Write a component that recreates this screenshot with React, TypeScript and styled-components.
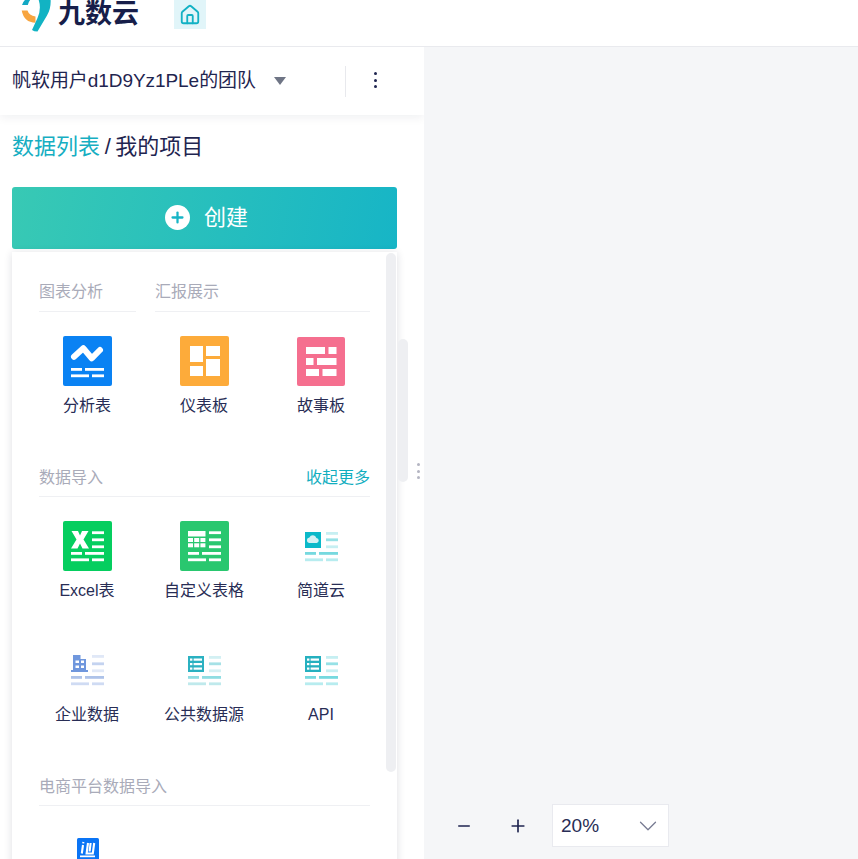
import React from 'react';
import styled, { createGlobalStyle } from 'styled-components';
import { Home, ChevronDown, Minus, Plus } from 'lucide-react';

const GlobalStyle = createGlobalStyle`
	html, body {
		margin: 0;
		padding: 0;
		height: 100%;
		overflow: hidden;
		background: #fff;
	}
	body {
		font-family: "Liberation Sans", "Noto Sans CJK SC", sans-serif;
		color: #1f2550;
	}
	#root {
		height: 100%;
	}
`;

const Page = styled.div`
	display: flex;
	flex-direction: column;
	height: 100vh;
	overflow: hidden;
`;

const Header = styled.header`
	flex: none;
	height: 46px;
	display: flex;
	align-items: flex-start;
	padding-left: 21px;
	box-sizing: border-box;
	background: #fff;
	overflow: hidden;
`;

const Logo = styled.div`
	display: flex;
	align-items: flex-start;
	gap: 7px;
	width: 153px;
`;

const LogoText = styled.span`
	font-family: "Noto Sans CJK SC", sans-serif;
	font-weight: 700;
	font-size: 27px;
	line-height: 27px;
	color: #171e4a;
	margin-top: -2px;
	white-space: nowrap;
`;

const HomeTab = styled.div`
	width: 32px;
	height: 29px;
	display: flex;
	align-items: center;
	justify-content: center;
	background: #e1f5f9;
	color: #12b1c4;
`;

const Body = styled.div`
	flex: 1;
	min-height: 0;
	display: flex;
	border-top: 1px solid #e9eaee;
`;

const Sidebar = styled.aside`
	position: relative;
	flex: none;
	width: 424px;
	display: flex;
	flex-direction: column;
	background: #fff;
	overflow: hidden;
`;

const TeamBar = styled.div`
	flex: none;
	height: 68px;
	display: flex;
	align-items: center;
	padding-left: 12px;
	box-shadow: 0 2px 10px rgba(20, 30, 60, 0.07);
`;

const TeamName = styled.span`
	font-size: 19px;
	line-height: 26px;
	letter-spacing: -0.06px;
	color: #1f2550;
	white-space: nowrap;
`;

const Caret = styled.span`
	width: 0;
	height: 0;
	margin-left: 18px;
	border-left: 6px solid transparent;
	border-right: 6px solid transparent;
	border-top: 8px solid #6f7585;
`;

const MoreButton = styled.div`
	margin-left: 59px;
	width: 59px;
	height: 29px;
	display: flex;
	flex-direction: column;
	align-items: center;
	justify-content: center;
	gap: 3.5px;
	padding-bottom: 2px;
	border-left: 1px solid #e8e9ed;
`;

const Dot = styled.i`
	width: 3px;
	height: 3px;
	background: #1f2550;
	border-radius: 50%;
`;

const Crumbs = styled.div`
	flex: none;
	margin: 17px 0 0 12px;
	height: 30px;
	font-size: 22px;
	line-height: 30px;
	word-spacing: -1.5px;
	color: #1f2550;
	white-space: nowrap;
`;

const CrumbLink = styled.span`
	color: #16aec2;
`;

const CreateButton = styled.div`
	flex: none;
	margin: 25px 0 0 12px;
	width: 385px;
	height: 62px;
	box-sizing: border-box;
	padding: 0 0 2px 4px;
	display: flex;
	align-items: center;
	justify-content: center;
	gap: 14px;
	border-radius: 3px;
	background: linear-gradient(100deg, #38c9b4 0%, #17b5c6 100%);
	color: #fff;
	font-size: 22px;
`;

const CreateText = styled.span`
	margin-bottom: 4px;
`;

const PlusCircle = styled.span`
	width: 25px;
	height: 25px;
	display: flex;
	align-items: center;
	justify-content: center;
	border-radius: 50%;
	background: #fff;
	color: #17b5c6;
`;

const Panel = styled.div`
	position: relative;
	flex: none;
	margin: 3px 0 0 12px;
	width: 385px;
	box-sizing: border-box;
	padding: 28px 27px 0;
	background: #fff;
	box-shadow: 0 1px 8px rgba(20, 30, 60, 0.14);
`;

const Tabs = styled.div`
	display: flex;
	gap: 19px;
`;

const SectionHead = styled.div<{ $grow?: boolean; $width?: number; $pad?: number }>`
	display: flex;
	justify-content: space-between;
	flex: ${(p) => (p.$grow ? 1 : 'none')};
	width: ${(p) => (p.$width ? `${p.$width}px` : 'auto')};
	padding-bottom: ${(p) => p.$pad ?? 6}px;
	border-bottom: 1px solid #eff0f3;
	font-size: 16px;
	line-height: 24px;
	color: #a9abb9;
`;

const FoldLink = styled.span`
	color: #12aebf;
`;

const Grid = styled.div<{ $last?: boolean }>`
	display: grid;
	grid-template-columns: repeat(3, 117px);
	row-gap: 42px;
	margin: 24px -10px ${(p) => (p.$last ? '0' : '48px')};
`;

const Item = styled.div`
	display: flex;
	flex-direction: column;
	align-items: center;
`;

const IconBox = styled.svg`
	display: block;
	width: 49px;
	height: 50px;
`;

const Label = styled.span`
	margin: 8px 0 0 -1px;
	font-size: 16px;
	line-height: 24px;
	color: #282d55;
	white-space: nowrap;
`;

const PanelScroll = styled.div`
	position: absolute;
	top: 1px;
	right: 1px;
	width: 10px;
	height: 519px;
	border-radius: 5px;
	background: #eeeff2;
`;

const SideScroll = styled.div`
	position: absolute;
	top: 292px;
	left: 398px;
	width: 10px;
	height: 143px;
	border-radius: 5px;
	background: #eeeff2;
`;

const Grip = styled.div`
	position: absolute;
	top: 416px;
	left: 417px;
	display: flex;
	flex-direction: column;
	gap: 3.5px;
`;

const GripDot = styled.i`
	width: 3px;
	height: 3px;
	border-radius: 50%;
	background: #b4b5c2;
`;

const Canvas = styled.main`
	position: relative;
	flex: 1;
	background: #f5f6f8;
`;

const ZoomBar = styled.div`
	position: absolute;
	left: 28px;
	bottom: 12px;
	display: flex;
	align-items: center;
	color: #1f2550;
`;

const ZoomButton = styled.span`
	width: 24px;
	height: 24px;
	display: flex;
	align-items: center;
	justify-content: center;
	margin-right: 30px;
`;

const ZoomSelect = styled.div`
	width: 117px;
	height: 43px;
	box-sizing: border-box;
	margin-left: -8px;
	padding: 0 5px 0 8px;
	display: flex;
	align-items: center;
	justify-content: space-between;
	background: #fff;
	border: 1px solid #e9eaef;
	font-size: 19px;
	color: #282d55;
`;

const SelectArrow = styled.span`
	display: flex;
	color: #777b92;
`;

type BarColors = { side: string[]; low: string[] };

const WHITE: BarColors = {
	side: ['#fff', '#fff', '#fff'],
	low: ['#fff', '#fff'],
};

// the text-like bars every data icon shares
const DocBars = ({ colors, side = true, top = 11 }: { colors: BarColors; side?: boolean; top?: number }) => (
	<>
		{side &&
			[top, 17.4, 24.4].map((y, i) => (
				<rect key={i} x="29" y={y} width="12" height="2.8" fill={colors.side[i]} />
			))}
		<rect x="8" y="31" width="11" height="2.8" fill={colors.low[0]} />
		<rect x="22" y="31" width="19" height="2.8" fill={colors.low[0]} />
		<rect x="8" y="37.4" width="18" height="2.8" fill={colors.low[1]} />
		<rect x="29" y="37.4" width="12" height="2.8" fill={colors.low[1]} />
	</>
);

const AnalysisIcon = () => (
	<IconBox viewBox="0 0 49 50">
		<rect width="49" height="50" rx="2" fill="#0a82f3" />
		<path
			d="M11 20.7 L20.3 12.3 L28.7 22.3 L37 14"
			fill="none"
			stroke="#fff"
			strokeWidth="6"
			strokeLinecap="round"
			strokeLinejoin="round"
		/>
		<g transform="translate(0 1)">
			<DocBars colors={WHITE} side={false} />
		</g>
	</IconBox>
);

const DashboardIcon = () => (
	<IconBox viewBox="0 0 49 50">
		<rect width="49" height="50" rx="2" fill="#fdab3a" />
		<rect x="10" y="10" width="13" height="16" fill="#fff" />
		<rect x="26" y="10" width="14" height="10" fill="#fff" />
		<rect x="10" y="30" width="13" height="10" fill="#fff" />
		<rect x="26" y="23" width="14" height="17" fill="#fff" />
	</IconBox>
);

const StoryIcon = () => (
	<IconBox viewBox="0 0 49 50">
		<rect x="0" y="1" width="48" height="49" rx="2" fill="#f56f8f" />
		<rect x="9" y="11" width="19" height="7" fill="#fff" />
		<rect x="31.5" y="11" width="8" height="7" fill="#fff" />
		<rect x="9" y="22" width="7.5" height="7" fill="#fff" />
		<rect x="20" y="22" width="19.5" height="7" fill="#fff" />
		<rect x="9" y="33" width="13" height="7" fill="#fff" />
		<rect x="25.5" y="33" width="14" height="7" fill="#fff" />
	</IconBox>
);

const ExcelIcon = () => (
	<IconBox viewBox="0 0 49 50">
		<rect width="49" height="50" rx="2" fill="#05ce5f" />
		<path d="M8.5 10 H15 L17 14.5 L19 10 H25.5 L20.5 18.5 L26 27.5 H19.5 L17 22.5 L14.5 27.5 H8 L13.5 18.5 Z" fill="#fff" />
		<DocBars colors={WHITE} top={10.3} />
	</IconBox>
);

const CustomTableIcon = () => (
	<IconBox viewBox="0 0 49 50">
		<rect width="49" height="50" rx="2" fill="#29c76f" />
		<rect x="8" y="10" width="17.5" height="5.5" fill="#fff" />
		{[17, 22.3].map((y) =>
			[8, 14.2, 20.4].map((x) => <rect key={`${x}-${y}`} x={x} y={y} width="5" height="4" fill="#fff" />),
		)}
		<DocBars colors={WHITE} top={10.3} />
	</IconBox>
);

const TEAL_BARS: BarColors = {
	side: ['#c6eff2', '#96e1e6', '#c6eff2'],
	low: ['#76d9df', '#b7ecef'],
};

const JianDaoIcon = () => (
	<IconBox viewBox="0 0 49 50">
		<rect x="8" y="11" width="16" height="16" fill="#0bb9c9" />
		<path
			d="M12 22 a2.8 2.8 0 0 1 .4 -5.5 a3.8 3.8 0 0 1 7 .4 a2.6 2.6 0 0 1 .4 5.1 Z"
			fill="#d4f1f3"
		/>
		<DocBars colors={TEAL_BARS} />
	</IconBox>
);

const BLUE_BARS: BarColors = {
	side: ['#e0e8f7', '#c4d3f0', '#e0e8f7'],
	low: ['#aec3e9', '#cfdbf3'],
};

const CompanyIcon = () => (
	<IconBox viewBox="0 0 49 50">
		<path
			fillRule="evenodd"
			d="M10 10 H17.5 V14 H23 V25 H25 V27 H8 V25 H10 Z M12.5 15.5 V18 H16 V15.5 Z M18 15.5 V18 H21 V15.5 Z M12.5 20.5 V23 H16 V20.5 Z M18 20.5 V23 H21 V20.5 Z"
			fill="#7097dd"
		/>
		<DocBars colors={BLUE_BARS} top={10} />
	</IconBox>
);

const ListIcon = ({ fill, bars }: { fill: string; bars: BarColors }) => (
	<IconBox viewBox="0 0 49 50">
		<rect x="8" y="11" width="16" height="16" fill={fill} />
		{[13.5, 18, 22.5].map((y) => (
			<React.Fragment key={y}>
				<rect x="10" y={y} width="2.4" height="2.2" fill="#fff" />
				<rect x="13.6" y={y} width="8.4" height="2.2" fill="#fff" />
			</React.Fragment>
		))}
		<DocBars colors={bars} />
	</IconBox>
);

const SOURCE_BARS: BarColors = {
	side: ['#d3f0f3', '#a6e1e6', '#d3f0f3'],
	low: ['#8fdde2', '#bfe9ec'],
};

const ShopIcon = () => (
	<IconBox viewBox="0 0 49 50">
		<rect x="14" y="8" width="22" height="22" rx="1.5" fill="#0a74f5" />
		<path
			d="M20 15 L18.8 23.5 M25 13 L23.6 23.5 H29.8 L31.2 13 M27.6 13 L26.6 21.5 M20.4 12 L20.2 13.4"
			fill="none"
			stroke="#fff"
			strokeWidth="2.1"
		/>
		<rect x="17" y="25.5" width="15" height="1.7" fill="#fff" />
	</IconBox>
);

const LogoMark = () => (
	<svg width="30" height="32" viewBox="0 0 30 32" aria-hidden="true">
		<path d="M1 5 Q2 1.5 5 -1 H10 Q7.5 1.5 6.8 5 Z" fill="#12a8c4" />
		<path d="M0.7 10.5 H6.5 Q8 15.5 14.5 16.5 V22.7 Q3 22.5 0.7 10.5 Z" fill="#f7a540" />
		<path d="M17 -2 H29.5 Q30.5 8 26 15.5 L16.5 31.5 Q13 31.5 11 30 L16.5 18 Q21 8 17 -2 Z" fill="#12b3c3" />
	</svg>
);

const App = () => {
	return (
		<Page>
			<GlobalStyle />
			<Header>
				<Logo>
					<LogoMark />
					<LogoText>九数云</LogoText>
				</Logo>
				<HomeTab>
					<Home size={22} strokeWidth={2} />
				</HomeTab>
			</Header>
			<Body>
				<Sidebar>
					<TeamBar>
						<TeamName>帆软用户d1D9Yz1PLe的团队</TeamName>
						<Caret />
						<MoreButton>
							<Dot />
							<Dot />
							<Dot />
						</MoreButton>
					</TeamBar>
					<Crumbs>
						<CrumbLink>数据列表</CrumbLink> / 我的项目
					</Crumbs>
					<CreateButton>
						<PlusCircle>
							<Plus size={17} strokeWidth={3.2} />
						</PlusCircle>
						<CreateText>创建</CreateText>
					</CreateButton>
					<Panel>
						<PanelScroll />
						<Tabs>
							<SectionHead $width={97} $pad={7}>
								图表分析
							</SectionHead>
							<SectionHead $grow $pad={7}>
								汇报展示
							</SectionHead>
						</Tabs>
						<Grid>
							<Item>
								<AnalysisIcon />
								<Label>分析表</Label>
							</Item>
							<Item>
								<DashboardIcon />
								<Label>仪表板</Label>
							</Item>
							<Item>
								<StoryIcon />
								<Label>故事板</Label>
							</Item>
						</Grid>
						<SectionHead>
							数据导入
							<FoldLink>收起更多</FoldLink>
						</SectionHead>
						<Grid>
							<Item>
								<ExcelIcon />
								<Label>Excel表</Label>
							</Item>
							<Item>
								<CustomTableIcon />
								<Label>自定义表格</Label>
							</Item>
							<Item>
								<JianDaoIcon />
								<Label>简道云</Label>
							</Item>
							<Item>
								<CompanyIcon />
								<Label>企业数据</Label>
							</Item>
							<Item>
								<ListIcon fill="#2bb1c1" bars={SOURCE_BARS} />
								<Label>公共数据源</Label>
							</Item>
							<Item>
								<ListIcon fill="#25b0bf" bars={TEAL_BARS} />
								<Label>API</Label>
							</Item>
						</Grid>
						<SectionHead>电商平台数据导入</SectionHead>
						<Grid $last>
							<Item>
								<ShopIcon />
							</Item>
						</Grid>
					</Panel>
					<SideScroll />
					<Grip>
						<GripDot />
						<GripDot />
						<GripDot />
					</Grip>
				</Sidebar>
				<Canvas>
					<ZoomBar>
						<ZoomButton>
							<Minus size={18} strokeWidth={2} />
						</ZoomButton>
						<ZoomButton>
							<Plus size={20} strokeWidth={2} />
						</ZoomButton>
						<ZoomSelect>
							20%
							<SelectArrow>
								<ChevronDown size={30} strokeWidth={1} />
							</SelectArrow>
						</ZoomSelect>
					</ZoomBar>
				</Canvas>
			</Body>
		</Page>
	);
};

export default App;
